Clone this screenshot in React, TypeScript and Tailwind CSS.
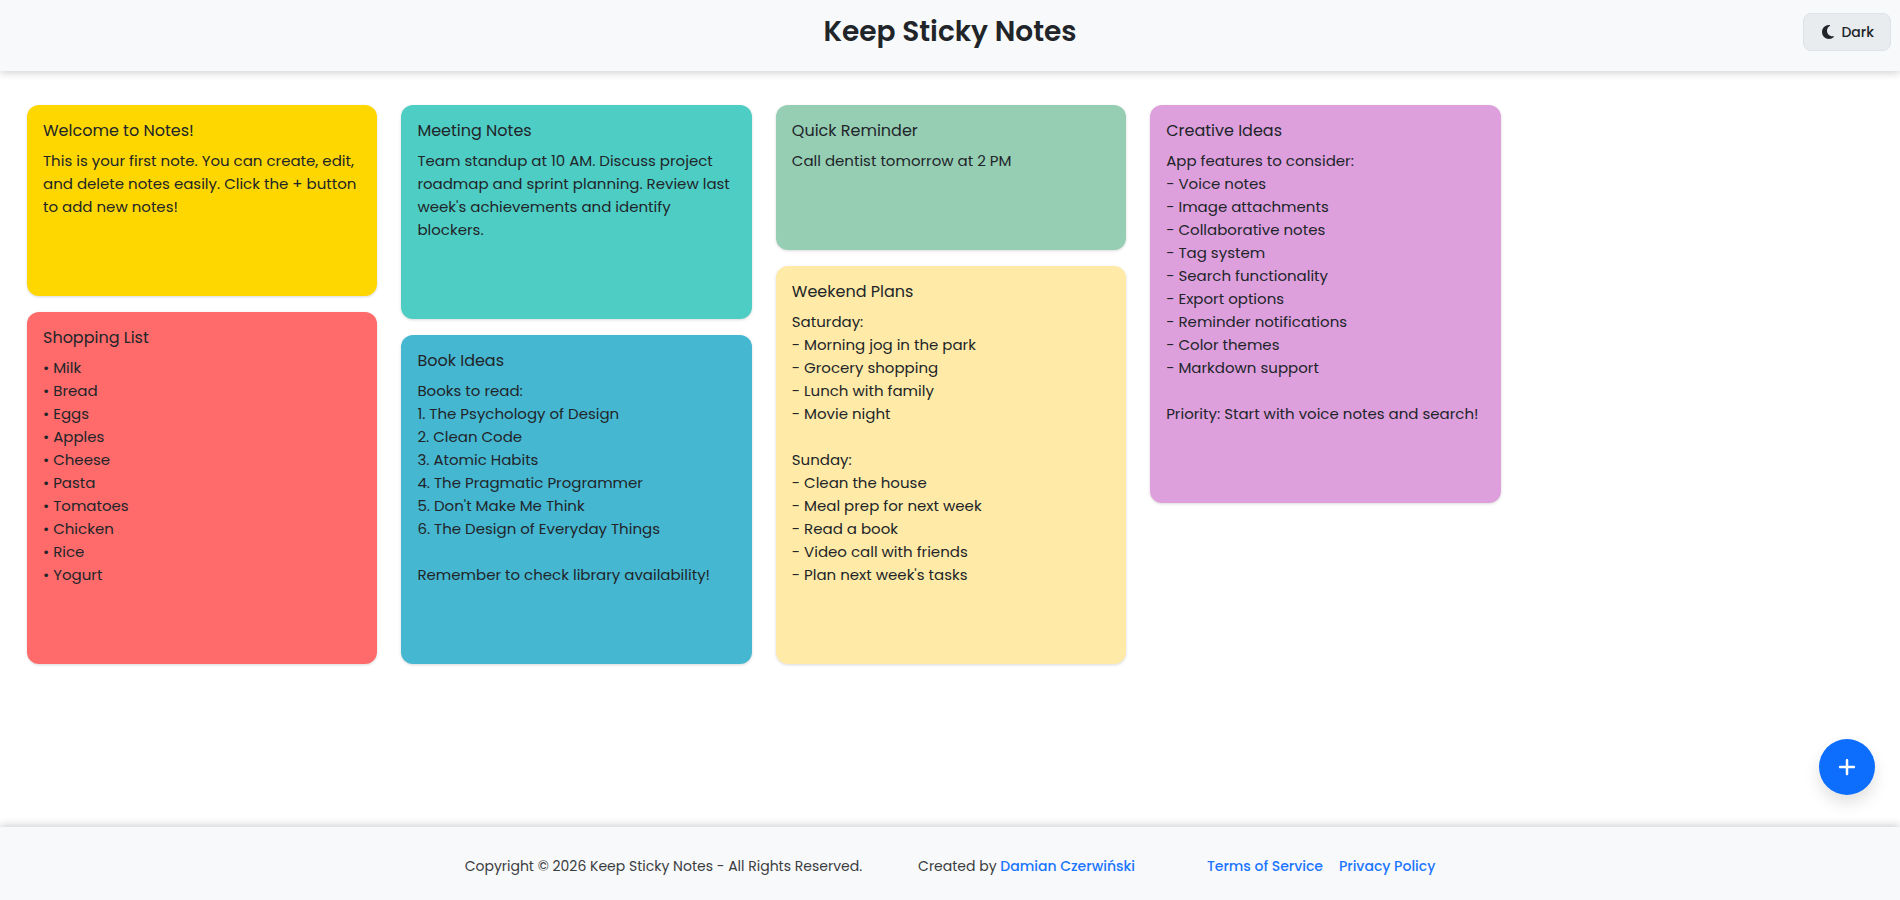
import { useState } from "react";
import { FaMoon, FaPlus } from "react-icons/fa6";

type Note = { title: string; body: string; color: string };

const columns: Note[][] = [
  [
    {
      title: "Welcome to Notes!",
      body: "This is your first note. You can create, edit, and delete notes easily. Click the + button to add new notes!",
      color: "bg-[#ffd700]",
    },
    {
      title: "Shopping List",
      body: "• Milk\n• Bread\n• Eggs\n• Apples\n• Cheese\n• Pasta\n• Tomatoes\n• Chicken\n• Rice\n• Yogurt",
      color: "bg-[#ff6b6b]",
    },
  ],
  [
    {
      title: "Meeting Notes",
      body: "Team standup at 10 AM. Discuss project roadmap and sprint planning. Review last week's achievements and identify blockers.",
      color: "bg-[#4ecdc4]",
    },
    {
      title: "Book Ideas",
      body: "Books to read:\n1. The Psychology of Design\n2. Clean Code\n3. Atomic Habits\n4. The Pragmatic Programmer\n5. Don't Make Me Think\n6. The Design of Everyday Things\n\nRemember to check library availability!",
      color: "bg-[#45b7d1]",
    },
  ],
  [
    { title: "Quick Reminder", body: "Call dentist tomorrow at 2 PM", color: "bg-[#96ceb4]" },
    {
      title: "Weekend Plans",
      body: "Saturday:\n- Morning jog in the park\n- Grocery shopping\n- Lunch with family\n- Movie night\n\nSunday:\n- Clean the house\n- Meal prep for next week\n- Read a book\n- Video call with friends\n- Plan next week's tasks",
      color: "bg-[#ffeaa7]",
    },
  ],
  [
    {
      title: "Creative Ideas",
      body: "App features to consider:\n- Voice notes\n- Image attachments\n- Collaborative notes\n- Tag system\n- Search functionality\n- Export options\n- Reminder notifications\n- Color themes\n- Markdown support\n\nPriority: Start with voice notes and search!",
      color: "bg-[#dda0dd]",
    },
  ],
];

function NoteCard({ note }: { note: Note }) {
  return (
    <article className={`rounded-xl px-4 pt-4 pb-[78px] shadow-[0_1px_3px_rgba(0,0,0,0.15)] ${note.color}`}>
      <h2 className="mb-2 text-base leading-5">{note.title}</h2>
      <p className="text-[15px] leading-[23px] whitespace-pre-line">{note.body}</p>
    </article>
  );
}

export default function App() {
  const [dark, setDark] = useState(false);
  return (
    <div
      className={`flex min-h-screen flex-col font-[Poppins,Inter,sans-serif] text-[#212529] ${dark ? "bg-[#212529]" : "bg-white"}`}
    >
      <header className="grid grid-cols-[1fr_auto_1fr] items-start bg-[#f8f9fa] pt-[13px] pb-5 shadow-[0_2px_8px_rgba(0,0,0,0.18)]">
        <h1 className="col-start-2 text-[28px] leading-[38px] font-semibold">Keep Sticky Notes</h1>
        <button
          type="button"
          onClick={() => setDark(!dark)}
          className="mr-[9px] flex h-[38px] items-center gap-[5px] justify-self-end rounded-lg border border-[#dee2e6] bg-[#e9ecef] px-4 text-sm font-medium"
        >
          <FaMoon className="size-4" aria-hidden="true" />
          Dark
        </button>
      </header>

      <main className="grid flex-1 grid-cols-5 items-start gap-6 pt-[34px] pr-[25px] pb-8 pl-[27px]">
        {columns.map((notes, i) => (
          <section key={i} className="flex flex-col gap-4">
            {notes.map((note) => (
              <NoteCard key={note.title} note={note} />
            ))}
          </section>
        ))}
      </main>

      <button
        type="button"
        aria-label="Add note"
        className="fixed right-[25px] bottom-[105px] flex size-14 items-center justify-center rounded-full bg-[#0d6efd] text-white shadow-[0_8px_16px_rgba(0,0,0,0.12)]"
      >
        <FaPlus className="size-5" aria-hidden="true" />
      </button>

      <footer className="flex flex-wrap items-center justify-center gap-y-2 bg-[#f8f9fa] pt-8 pb-[27px] text-sm leading-[14px] text-[#3a3d41] shadow-[0_-2px_8px_rgba(0,0,0,0.18)]">
        <p className="mr-14">Copyright © 2026 Keep Sticky Notes - All Rights Reserved.</p>
        <p className="mr-[72px]">
          Created by{" "}
          <a href="#author" className="font-medium text-[#1a75ff]">
            Damian Czerwiński
          </a>
        </p>
        <nav className="flex gap-4 font-medium text-[#1a75ff]">
          <a href="#terms">Terms of Service</a>
          <a href="#privacy">Privacy Policy</a>
        </nav>
      </footer>
    </div>
  );
}
